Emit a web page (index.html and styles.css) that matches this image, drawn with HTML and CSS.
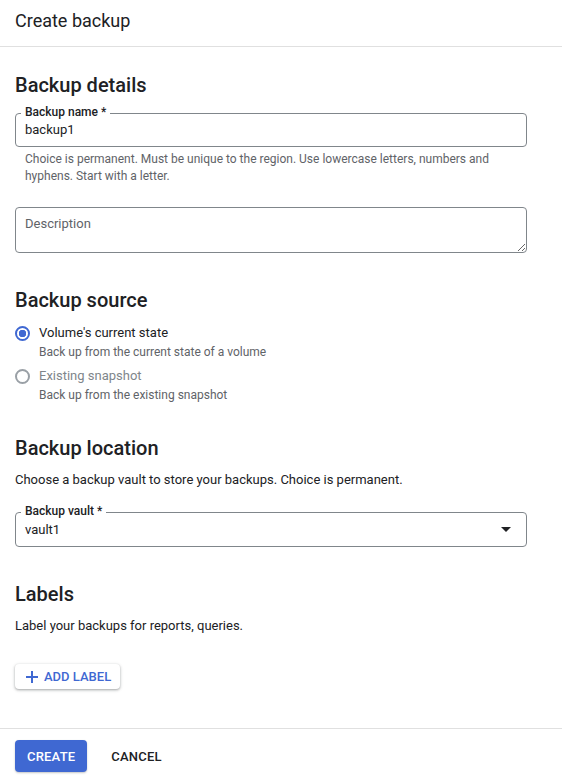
FILE: index.html
```html
<!DOCTYPE html>
<html lang="en">
<head>
<meta charset="utf-8">
<title>Create backup</title>
<link rel="stylesheet" href="styles.css">
</head>
<body>
<div class="page">
  <header class="topbar">Create backup</header>
  <main class="content">
    <section class="section section-details">
      <h2 class="section-title">Backup details</h2>
      <div class="field field-name">
        <span class="field-label">Backup name *</span>
        <span class="field-value">backup1</span>
      </div>
      <p class="hint">Choice is permanent. Must be unique to the region. Use lowercase letters, numbers and hyphens. Start with a letter.</p>
      <textarea class="textarea" placeholder="Description"></textarea>
    </section>

    <section class="section section-source">
      <h2 class="section-title">Backup source</h2>
      <div class="radio-list">
        <div class="radio-row">
          <span class="radio radio-checked"></span>
          <div class="radio-text">
            <div class="radio-main">Volume's current state</div>
            <div class="radio-sub">Back up from the current state of a volume</div>
          </div>
        </div>
        <div class="radio-row radio-row-disabled">
          <span class="radio"></span>
          <div class="radio-text">
            <div class="radio-main">Existing snapshot</div>
            <div class="radio-sub">Back up from the existing snapshot</div>
          </div>
        </div>
      </div>
    </section>

    <section class="section section-location">
      <h2 class="section-title">Backup location</h2>
      <p class="section-desc">Choose a backup vault to store your backups. Choice is permanent.</p>
      <div class="field field-select">
        <span class="field-label">Backup vault *</span>
        <span class="field-value">vault1</span>
        <svg class="select-arrow" width="10" height="5" viewBox="0 0 10 5"><path d="M0 0h10L5 5z" fill="#202124"/></svg>
      </div>
    </section>

    <section class="section">
      <h2 class="section-title">Labels</h2>
      <p class="section-desc">Label your backups for reports, queries.</p>
      <button class="btn-add" type="button">
        <svg class="plus" width="12" height="12" viewBox="0 0 12 12"><path d="M6 0v12M0 6h12" stroke="currentColor" stroke-width="2"/></svg>
        <span>ADD LABEL</span>
      </button>
    </section>
  </main>
  <footer class="footer">
    <button class="btn-primary" type="button">CREATE</button>
    <button class="btn-text" type="button">CANCEL</button>
  </footer>
</div>
</body>
</html>
```

FILE: styles.css
```css
* { box-sizing: border-box; }

body {
  margin: 0;
  font-family: Roboto, "Liberation Sans", Arial, sans-serif;
  color: #202124;
  background: #fff;
}

.topbar {
  height: 47px;
  padding: 9px 15px 0;
  font-size: 18px;
  line-height: 24px;
  border-bottom: 1px solid #e0e0e0;
}

.content {
  padding: 0 35px 0 15px;
}

.section-title {
  margin: 35px 0 0;
  font-size: 20px;
  line-height: 24px;
  font-weight: 500;
}

.section-details .section-title { margin-top: 26px; }
.section-location .section-title { margin-top: 32px; }

.field {
  position: relative;
  display: flex;
  align-items: center;
  height: 34px;
  margin-top: 16px;
  padding: 0 15px 0 9px;
  border: 1px solid #80868b;
  border-radius: 4px;
  font-size: 13px;
}

.field-select { height: 35px; margin-top: 22px; }

.field-label {
  position: absolute;
  top: -9px;
  left: 5px;
  padding: 0 4px;
  background: #fff;
  font-size: 12px;
  line-height: 14px;
  font-weight: 500;
  color: #202124;
}

.field-value { flex: 1; line-height: 20px; }

.select-arrow { display: block; }

.hint {
  margin: 4px 0 0;
  padding: 0 10px;
  font-size: 12px;
  line-height: 17px;
  color: #5f6368;
}

.textarea {
  display: block;
  width: 100%;
  height: 46px;
  margin-top: 22px;
  padding: 8px 9px;
  border: 1px solid #80868b;
  border-radius: 4px;
  font-family: inherit;
  font-size: 13px;
  line-height: 16px;
  color: #202124;
  resize: vertical;
}

.textarea::placeholder { color: #5f6368; }

.radio-list {
  display: flex;
  flex-direction: column;
  gap: 5px;
  margin-top: 11px;
}

.radio-row {
  display: grid;
  grid-template-columns: 15px 1fr;
  column-gap: 9px;
  align-items: start;
}

.radio {
  width: 15px;
  height: 15px;
  margin-top: 3px;
  border: 2px solid #9aa0a6;
  border-radius: 50%;
}

.radio-checked {
  border-color: #3f68d2;
  background: radial-gradient(circle, #3f68d2 0 3.5px, #fff 4px);
}

.radio-main { font-size: 13px; line-height: 20px; }
.radio-sub { font-size: 12px; line-height: 18px; color: #5f6368; }
.radio-row-disabled .radio-main { color: #80868b; }

.section-desc {
  margin: 10px 0 0;
  font-size: 13px;
  line-height: 20px;
}

.btn-add {
  display: inline-flex;
  align-items: center;
  gap: 6px;
  height: 25px;
  margin-top: 28px;
  padding: 0 9px 0 11px;
  border: none;
  border-radius: 4px;
  background: #fff;
  color: #3f68d2;
  font-family: inherit;
  font-size: 13px;
  font-weight: 500;
  box-shadow: 0 1px 2px rgba(60, 64, 67, 0.3), 0 1px 3px 1px rgba(60, 64, 67, 0.15);
}

.plus { display: block; }

.footer {
  display: flex;
  gap: 12px;
  margin-top: 39px;
  padding: 11px 15px 9px;
  border-top: 1px solid #e0e0e0;
}

.btn-primary,
.btn-text {
  height: 32px;
  padding: 0 12px;
  border: none;
  border-radius: 4px;
  font-family: inherit;
  font-size: 13px;
  font-weight: 500;
  letter-spacing: 0.2px;
}

.btn-primary {
  background: #3f68d2;
  color: #fff;
  box-shadow: 0 1px 2px rgba(60, 64, 67, 0.3);
}

.btn-text {
  background: transparent;
  color: #202124;
}
```
